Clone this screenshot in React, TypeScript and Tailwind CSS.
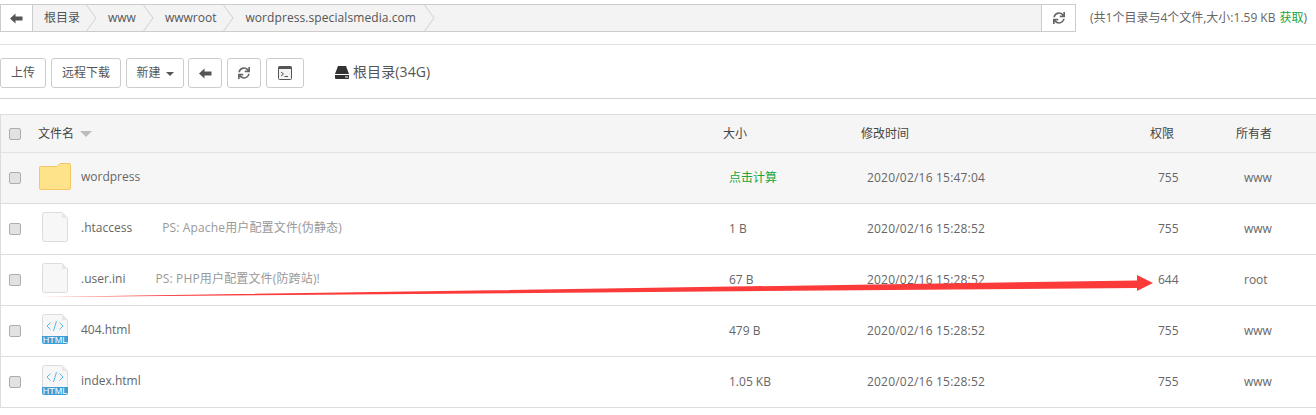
import React from "react";
import { FaSync } from "react-icons/fa";

const ArrowL = () => (
  <svg width="13" height="11" viewBox="0 0 13 11" className="block">
    <path d="M0 5.5 L5.5 0.5 V3.5 H12.5 V7.5 H5.5 V10.5 Z" fill="#555" />
  </svg>
);

const Chevron = () => (
  <svg width="11" height="26" viewBox="0 0 11 26" className="block shrink-0">
    <path d="M0.5 0 L10 13 L0.5 26" fill="none" stroke="#d0d0d0" strokeWidth="1" />
  </svg>
);

const Check = () => (
  <div className="w-3 h-3 rounded-[2px] border border-[#adadad] bg-[#e2e2e2] shrink-0" />
);

const FileIcon = ({ html }: { html?: boolean }) => (
  <svg width="26" height="30" viewBox="0 0 26 30" className="block">
    <path d="M2.5 0.5 H20 L25.5 6 V27.5 a2 2 0 0 1 -2 2 H2.5 a2 2 0 0 1 -2 -2 V2.5 a2 2 0 0 1 2 -2 Z" fill="#f7f7f7" stroke="#dcdcdc" />
    <path d="M20 0.5 V6 H25.5 Z" fill="#e6e6e6" />
    {html && (
      <>
        <path d="M8.5 8.5 L5 12 L8.5 15.5 M17.5 8.5 L21 12 L17.5 15.5 M14.5 7 L11.5 17" fill="none" stroke="#5bb8e8" strokeWidth="1" />
        <path d="M0 22 H26 V28 a2 2 0 0 1 -2 2 H2 a2 2 0 0 1 -2 -2 Z" fill="#3a9fd4" />
        <text x="13" y="29.2" textAnchor="middle" fontSize="9" fill="#fff" fontFamily="'Liberation Sans', sans-serif">HTML</text>
      </>
    )}
  </svg>
);

const Folder = () => (
  <svg width="32" height="27" viewBox="0 0 32 27" className="block">
    <path d="M1.5 3.5 H18 L21 0.5 H30 a1.5 1.5 0 0 1 1.5 1.5 V25 a1.5 1.5 0 0 1 -1.5 1.5 H2 a1.5 1.5 0 0 1 -1.5 -1.5 V4.5 a1 1 0 0 1 1 -1 Z" fill="#ffe38a" stroke="#f3c766" />
  </svg>
);

const Btn = ({ w, children }: { w: string; children: React.ReactNode }) => (
  <button className={`${w} h-[30px] shrink-0 flex items-center justify-center border border-[#ccc] rounded-[3px] bg-white text-xs text-[#555]`}>
    {children}
  </button>
);

type Row = {
  name: string;
  icon: "folder" | "file" | "html";
  ps?: string;
  size: string;
  time: string;
  perm: string;
  owner: string;
  green?: boolean;
  shade?: boolean;
};

const rows: Row[] = [
  { name: "wordpress", icon: "folder", size: "点击计算", time: "2020/02/16 15:47:04", perm: "755", owner: "www", green: true, shade: true },
  { name: ".htaccess", icon: "file", ps: "PS: Apache用户配置文件(伪静态)", size: "1 B", time: "2020/02/16 15:28:52", perm: "755", owner: "www" },
  { name: ".user.ini", icon: "file", ps: "PS: PHP用户配置文件(防跨站)!", size: "67 B", time: "2020/02/16 15:28:52", perm: "644", owner: "root" },
  { name: "404.html", icon: "html", size: "479 B", time: "2020/02/16 15:28:52", perm: "755", owner: "www" },
  { name: "index.html", icon: "html", size: "1.05 KB", time: "2020/02/16 15:28:52", perm: "755", owner: "www" },
];

export default function App() {
  return (
    <div className="relative w-[1316px] h-[415px] overflow-hidden bg-white text-xs text-[#666] font-['Open_Sans','Noto_Sans_CJK_SC',sans-serif]">
      {/* path bar */}
      <div className="pt-1 h-[45px] border-b border-[#e0e0e0] flex items-start">
        <div className="w-[1076px] h-[28px] border border-[#ccc] bg-[#f3f3f3] flex items-center">
          <div className="w-[32px] h-full bg-white border-r border-[#ccc] flex items-center justify-center shrink-0">
            <ArrowL />
          </div>
          <span className="ml-[11px] text-[#555]">根目录</span>
          <div className="ml-[6px]"><Chevron /></div>
          <span className="ml-[11px] text-[#555]">www</span>
          <div className="ml-[7px]"><Chevron /></div>
          <span className="ml-[11px] text-[#555]">wwwroot</span>
          <div className="ml-[7px]"><Chevron /></div>
          <span className="ml-[11px] text-[#555] tracking-[0.08px]">wordpress.specialsmedia.com</span>
          <div className="ml-[8px]"><Chevron /></div>
          <div className="ml-auto w-[34px] h-full bg-white border-l border-[#ccc] flex items-center justify-center">
            <FaSync className="text-[#666] text-[12px]" />
          </div>
        </div>
        <div className="ml-[14px] h-[28px] flex items-center text-[#666] whitespace-nowrap">
          (共1个目录与4个文件,大小:1.59 KB<span className="ml-1 text-[#20a53a]">获取</span>)
        </div>
      </div>

      {/* toolbar */}
      <div className="h-[54px] border-b border-[#d4d4d4] flex items-center pt-[3px]">
        <Btn w="w-[46px]">上传</Btn>
        <div className="ml-[5px]"><Btn w="w-[70px]">远程下载</Btn></div>
        <div className="ml-[5px]">
          <Btn w="w-[58px]">
            新建
            <span className="ml-[5px] mt-[2px] w-0 h-0 border-x-[4px] border-x-transparent border-t-[4px] border-t-[#555]" />
          </Btn>
        </div>
        <div className="ml-[4px]"><Btn w="w-[34px]"><ArrowL /></Btn></div>
        <div className="ml-[5px]"><Btn w="w-[34px]"><FaSync className="text-[#666] text-[12px]" /></Btn></div>
        <div className="ml-[5px]">
          <Btn w="w-[38px]">
            <svg width="14" height="14" viewBox="0 0 14 14" className="block">
              <rect x="0.5" y="0.5" width="13" height="13" rx="1" fill="#f4f4f4" stroke="#555" />
              <rect x="0.5" y="0.5" width="13" height="2.5" fill="#555" />
              <path d="M3 6 L5.5 8 L3 10 M6.5 10.5 H10" fill="none" stroke="#555" />
            </svg>
          </Btn>
        </div>
        <div className="ml-[31px] -mt-[2px] flex items-center text-sm text-[#555]">
          <svg width="14" height="13" viewBox="0 0 14 13" className="block">
            <path d="M3 0 H11 L14 8 H0 Z" fill="#333" />
            <path d="M0 9 H14 V12 a1 1 0 0 1 -1 1 H1 a1 1 0 0 1 -1 -1 Z" fill="#333" />
            <rect x="10" y="10.5" width="3" height="1" fill="#fff" />
          </svg>
          <span className="ml-1 tracking-[0.1px]">根目录(34G)</span>
        </div>
      </div>

      {/* table */}
      <div className="mt-[15px] border-l border-t border-[#ddd] h-[294px] flex flex-col">
        <div className="h-[38px] shrink-0 bg-[#f5f5f5] border-b border-[#e2e2e2] flex items-center text-[#444]">
          <div className="w-[37px] pl-[8px] shrink-0"><Check /></div>
          <div className="w-[685px] shrink-0 flex items-center">
            文件名
            <span className="ml-[6px] mt-[1px] w-0 h-0 border-x-[6px] border-x-transparent border-t-[6px] border-t-[#bbb]" />
          </div>
          <div className="w-[138px] shrink-0">大小</div>
          <div className="w-[289px] shrink-0">修改时间</div>
          <div className="w-[85px] shrink-0">权限</div>
          <div className="ml-[1px]">所有者</div>
        </div>
        {rows.map((r) => (
          <div key={r.name} className={`h-[51px] shrink-0 border-b border-[#ddd] flex items-center ${r.shade ? "bg-[#f6f6f6]" : "bg-white"}`}>
            <div className="w-[37px] pl-[8px] shrink-0"><Check /></div>
            <div className="w-[691px] shrink-0 flex items-center text-[#666]">
              <div className="w-[43px] shrink-0 flex justify-center pr-[9px] -mt-[4px]">
                {r.icon === "folder" ? <Folder /> : <FileIcon html={r.icon === "html"} />}
              </div>
              <span className="-mt-[2px]">{r.name}</span>
              {r.ps && <span className="ml-[30px] -mt-[2px] text-[#999] tracking-[0.15px]">{r.ps}</span>}
            </div>
            <div className={`w-[138px] shrink-0 ${r.green ? "text-[#20a53a]" : "text-[#666]"}`}>{r.size}</div>
            <div className="w-[291px] shrink-0 text-[#666] tracking-[0.2px]">{r.time}</div>
            <div className="w-[86px] shrink-0 text-[#666]">{r.perm}</div>
            <div className="text-[#666]">{r.owner}</div>
          </div>
        ))}
      </div>

      {/* red annotation arrow */}
      <svg className="absolute left-0 top-0 pointer-events-none" width="1316" height="415" viewBox="0 0 1316 415">
        <path d="M41 297 L1137 280.5 L1137 275 L1153 283 L1137 291 L1137 288 Z" fill="#fb3a3a" />
      </svg>
    </div>
  );
}
